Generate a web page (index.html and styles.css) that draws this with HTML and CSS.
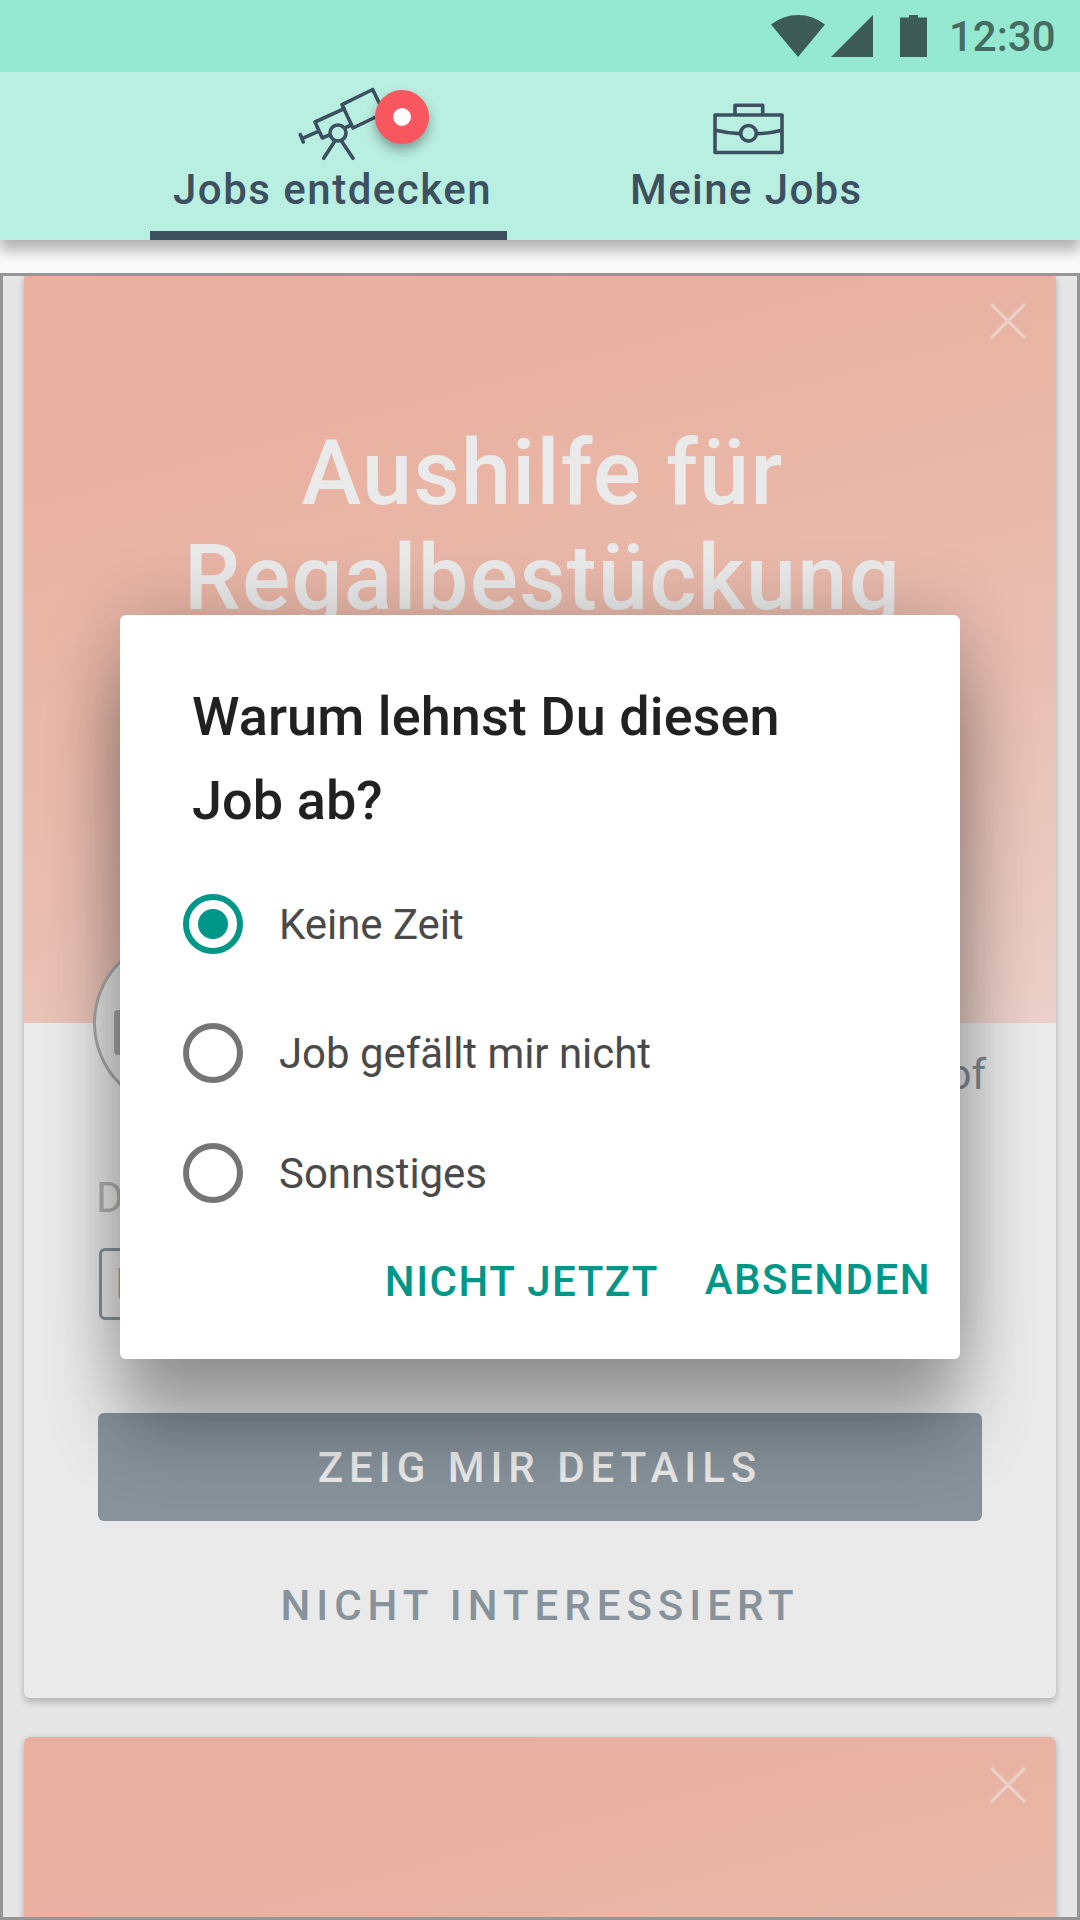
FILE: index.html
```html
<!DOCTYPE html>
<html lang="de">
<head>
<meta charset="utf-8">
<title>Jobs entdecken</title>
<link rel="stylesheet" href="styles.css">
</head>
<body>
<div class="screen">
  <header class="statusbar">
    <svg class="status-icons" width="156" height="42" viewBox="771 15 156 42" fill="#3d5c53">
      <path d="M771 24.5Q783 15 798 15T825 24.5L798 57Z"/>
      <path d="M831 57H873V15Z"/>
      <path d="M900 17.500H909V15H918V17.500H927V57H900Z"/>
    </svg>
    <span class="clock">12:30</span>
  </header>
  <nav class="tabs">
    <a class="tab tab-active">
      <svg class="tab-icon" width="357" height="94" viewBox="150 72 357 94">
        <path d="M300.300 134.500L303.300 142M302 138.700L318.300 131.300M344.300 108.700L315 122L322.300 138L330 134.700M345.300 127.700L351.300 125M384 113L353 128L342 104.700L372.700 89.500L384 113M335 140.700L323.700 158.300M341.300 140.700L353 158.300"/>
        <circle cx="338" cy="133" r="8"/>
      </svg>
      <span class="badge"></span>
      <span class="tab-label label-discover">Jobs entdecken</span>
    </a>
    <a class="tab tab-mine">
      <svg class="tab-icon" width="357" height="94" viewBox="570 72 357 94">
        <path d="M715 115H782V152.500H715ZM735 114V105.300H762.700V114M716 130.300Q728 133.500 740 133.600M757 133.600Q770 133.500 782 130.300"/>
        <circle cx="748.500" cy="133.300" r="7.800"/>
      </svg>
      <span class="tab-label label-mine">Meine Jobs</span>
    </a>
  </nav>
  <main class="feed">
    <article class="card">
      <div class="hero">
        <svg class="close" width="36" height="36" viewBox="0 0 36 36"><path d="M1 1L35 35M35 1L1 35"/></svg>
        <h1 class="job-title">Aushilfe für<br>Regalbestückung</h1>
      </div>
      <div class="card-body">
        <div class="company">
          <div class="logo"><span class="logo-mark"></span></div>
          <span class="place">of</span>
        </div>
        <p class="caption">D</p>
        <span class="chip">I</span>
        <button class="primary">ZEIG MIR DETAILS</button>
        <button class="secondary">NICHT INTERESSIERT</button>
      </div>
    </article>
    <article class="card">
      <div class="hero">
        <svg class="close" width="36" height="36" viewBox="0 0 36 36"><path d="M1 1L35 35M35 1L1 35"/></svg>
      </div>
    </article>
  </main>
  <section class="dialog" role="dialog">
    <h2 class="question">Warum lehnst Du diesen<br>Job ab?</h2>
    <div class="options">
      <label class="option"><span class="radio radio-on"></span><span>Keine Zeit</span></label>
      <label class="option"><span class="radio"></span><span>Job gefällt mir nicht</span></label>
      <label class="option"><span class="radio"></span><span>Sonnstiges</span></label>
    </div>
    <div class="actions">
      <button class="action later">NICHT JETZT</button>
      <button class="action">ABSENDEN</button>
    </div>
  </section>
</div>
</body>
</html>
```
FILE: styles.css
```css
* { box-sizing: border-box; margin: 0; padding: 0; }
body { background: #fafafa; font-family: Roboto, sans-serif; font-size: 42px; }
button { font: inherit; font-weight: 500; border: 0; background: none; white-space: nowrap; display: block; }
.screen { position: relative; width: 1080px; height: 1920px; overflow: hidden; display: flex; flex-direction: column; background: #fafafa; }

.statusbar { position: relative; z-index: 1; height: 72px; background: #94e9d0; display: flex; justify-content: flex-end; align-items: center; gap: 22px; padding-right: 25px; flex: none; }
.clock { width: 106px; padding-top: 2px; font-weight: 500; line-height: 48px; color: #446c61; white-space: nowrap; }

.tabs { height: 168px; flex: none; background: #b9efe1; display: flex; gap: 63px; padding-left: 150px; box-shadow: 0 12px 12px rgba(0,0,0,.24), 0 0 12px rgba(0,0,0,.12); }
.tab { position: relative; width: 357px; display: flex; flex-direction: column; }
.tab-active { border-bottom: 9px solid #3d5060; }
.tab-icon { fill: none; stroke: #3d5060; stroke-width: 3.6; stroke-linejoin: round; stroke-linecap: round; display: block; }
.tab-label { font-weight: 500; line-height: 48px; color: #3d5060; white-space: nowrap; }
.label-discover { margin-left: 23px; letter-spacing: 1.5px; }
.label-mine { margin-left: 60px; letter-spacing: 1.4px; }
.badge { position: absolute; left: 225px; top: 18px; width: 54px; height: 54px; border-radius: 50%; background: #fff; border: 18px solid #f95760; box-shadow: 0 6px 12px rgba(0,0,0,.34); }

.feed { margin-top: 33px; height: 1647px; border: 3px solid #969696; background: #e6e6e6; overflow: hidden; padding: 0 21px; display: flex; flex-direction: column; gap: 39px; }
.card { flex: none; height: 1425px; border-radius: 6px; background: #eaeaea; box-shadow: 0 6px 6px rgba(0,0,0,.14), 0 0 6px rgba(0,0,0,.12); }
.card:first-child { margin-top: -3px; }
.hero { height: 750px; border-radius: 6px 6px 0 0; background: linear-gradient(165deg, #e9b0a0 0%, #e9b1a1 22%, #e9b9aa 46%, #e9beb2 63%, #e9c6bc 80%, #ebd1ca 100%); padding: 30px 30px 0; display: flex; flex-direction: column; }
.close { align-self: flex-end; fill: none; stroke: #ebd0c7; stroke-width: 3.2; }
.job-title { margin-top: 82px; padding-left: 5px; text-align: center; font-size: 90px; line-height: 105px; font-weight: 500; color: #eaeaea; letter-spacing: 1.3px; }
.card-body { padding: 0 75px; display: flex; flex-direction: column; }
.company { display: flex; justify-content: space-between; height: 147px; margin: 0 -5px 0 -6px; }
.logo { width: 174px; height: 174px; margin-top: -87px; border-radius: 50%; border: 3px solid #aaa; background: #e6e6e6; padding: 71px 0 0 18px; }
.logo-mark { display: block; width: 60px; height: 45px; border-radius: 4px; background: #a7a7a5; }
.place { margin-top: 28px; line-height: 48px; color: #808c95; }
.caption { line-height: 48px; color: #b2b2b2; margin: 4px 0 0 -3px; }
.chip { width: 200px; height: 72px; margin-top: 26px; border: 3.500px solid #87939c; border-radius: 6px; padding-left: 13px; line-height: 65px; color: #a5a5a5; }
.primary { height: 108px; margin: 93px -1px 0; border-radius: 6px; background: #87929b; color: #eaeaea; letter-spacing: 6px; }
.secondary { height: 108px; margin-top: 30px; color: #87929b; letter-spacing: 6px; }

.dialog { position: absolute; left: 120px; top: 615px; width: 840px; height: 744px; border-radius: 6px; background: #fff; padding: 60px 29px 0 63px; box-shadow: 0 72px 72px rgba(0,0,0,.3), 0 0 72px rgba(0,0,0,.22); }
.question { margin-left: 9px; font-size: 54px; line-height: 84px; font-weight: 500; color: #212121; white-space: nowrap; letter-spacing: .08px; }
.options { margin-top: 51px; display: flex; flex-direction: column; }
.option { display: flex; align-items: center; gap: 36px; height: 60px; color: #4a4a4a; white-space: nowrap; letter-spacing: -.05px; }
.option + .option { margin-top: 69px; }
.option + .option + .option { margin-top: 60px; }
.radio { flex: none; width: 60px; height: 60px; border-radius: 50%; border: 6px solid #757575; }
.radio-on { border-color: #009688; background: radial-gradient(circle, #009688 14.500px, #fff 15.500px); }
.actions { margin-top: 53px; display: flex; justify-content: flex-end; align-items: flex-start; gap: 46px; }
.action { color: #009688; line-height: 48px; letter-spacing: 1.5px; }
.later { padding-top: 2px; }
```
